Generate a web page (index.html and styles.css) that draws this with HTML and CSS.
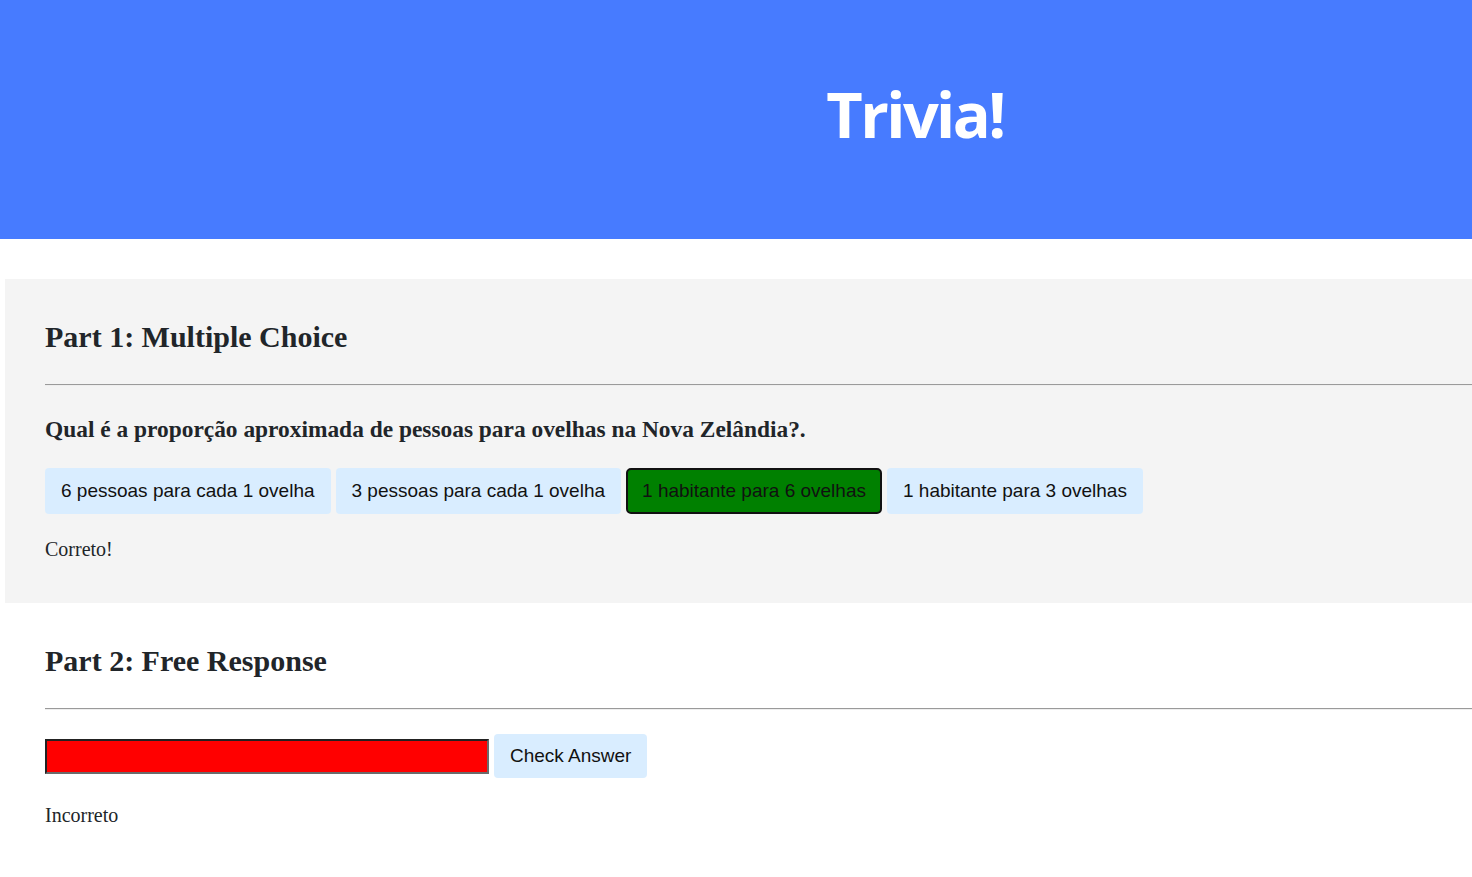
FILE: index.html
```html
<!DOCTYPE html>
<html lang="pt">
<head>
<meta charset="utf-8">
<title>Trivia!</title>
<link rel="stylesheet" href="styles.css">
</head>
<body>
<header class="header">
  <h1 class="title">Trivia!</h1>
</header>
<main class="content">
  <section class="section section-active">
    <h2 class="section-title">Part 1: Multiple Choice</h2>
    <hr class="rule">
    <h3 class="question">Qual é a proporção aproximada de pessoas para ovelhas na Nova Zelândia?.</h3>
    <div class="choices">
      <button class="btn choice">6 pessoas para cada 1 ovelha</button>
      <button class="btn choice">3 pessoas para cada 1 ovelha</button>
      <button class="btn choice choice-correct">1 habitante para 6 ovelhas</button>
      <button class="btn choice">1 habitante para 3 ovelhas</button>
    </div>
    <p class="feedback">Correto!</p>
  </section>
  <section class="section">
    <h2 class="section-title">Part 2: Free Response</h2>
    <hr class="rule">
    <form class="answer-row">
      <input class="answer-input" type="text">
      <button class="btn check" type="button">Check Answer</button>
    </form>
    <p class="feedback">Incorreto</p>
  </section>
</main>
</body>
</html>
```

FILE: styles.css
```css
html, body {
  margin: 0;
  padding: 0;
}

body {
  background: #fff;
  color: #212529;
  font-family: "Liberation Serif", "Times New Roman", serif;
  overflow-x: hidden;
}

.header {
  background-color: #477bff;
  color: #fff;
  height: 239px;
  box-sizing: border-box;
  padding: 82px 0 0 358px;
  text-align: center;
}

.title {
  margin: 0;
  font-family: "Open Sans", "Liberation Sans", sans-serif;
  font-weight: 700;
  font-size: 63px;
  line-height: 64px;
  letter-spacing: -2.6px;
}

.content {
  padding: 40px 0 0 5px;
}

.section {
  padding: 40px 0 42px 40px;
}

.section-active {
  background-color: #f4f4f4;
}

.section-title {
  margin: 0;
  font-size: 30px;
  line-height: 36px;
  font-weight: 700;
}

.rule {
  margin: 29px 0 0 0;
  height: 0;
  border: 0;
  border-top: 1px solid #9a9a9a;
  border-bottom: 1px solid #eeeeee;
}

.question {
  margin: 28px 0 0 0;
  font-size: 23.4px;
  line-height: 30px;
  font-weight: 700;
}

.choices {
  display: flex;
  gap: 5px;
  margin-top: 24px;
}

.btn {
  font-family: "Liberation Sans", Arial, sans-serif;
  font-size: 19px;
  line-height: 28px;
  color: #111;
  background-color: #d9edff;
  border-radius: 4px;
  cursor: pointer;
}

.choice {
  border: 2px solid transparent;
  padding: 7px 14px;
}

.choice-correct {
  background-color: #008000;
  border-color: #111;
  border-radius: 5px;
}

.feedback {
  margin: 23px 0 0 0;
  font-size: 20px;
  line-height: 24px;
}

.answer-row {
  display: flex;
  align-items: center;
  gap: 5px;
  margin: 24px 0 0 0;
}

.answer-input {
  width: 444px;
  height: 35px;
  box-sizing: border-box;
  margin: 0;
  background-color: #ff0000;
  border-width: 2px;
  border-style: solid;
  border-color: #222 #6b6b6b #6b6b6b #222;
  padding: 0;
}

.check {
  border: 1px solid transparent;
  padding: 7px 15px;
}

.section + .section .feedback {
  margin-top: 25px;
}
```
